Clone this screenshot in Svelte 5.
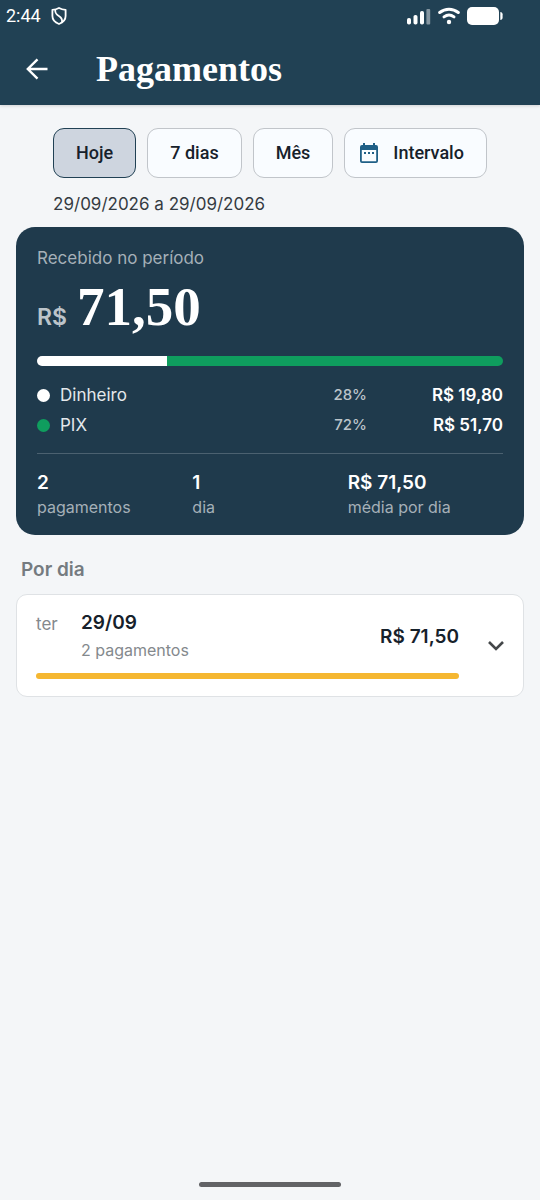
<script>
    const filters = [
        { id: 'hoje', label: 'Hoje' },
        { id: 'semana', label: '7 dias' },
        { id: 'mes', label: 'Mês' },
        { id: 'intervalo', label: 'Intervalo', icon: true }
    ];

    const methods = [
        { name: 'Dinheiro', percent: 28, total: 19.8, kind: 'cash' },
        { name: 'PIX', percent: 72, total: 51.7, kind: 'pix' }
    ];

    const days = [{ weekday: 'ter', date: '29/09', count: 2, total: 71.5 }];

    let selected = $state('hoje');
    let total = $derived(methods.reduce((sum, m) => sum + m.total, 0));
    let highest = Math.max(...days.map((d) => d.total));

    function money(value) {
        return value.toFixed(2).replace('.', ',');
    }
</script>

<div class="screen">
    <header>
        <div class="status-bar">
            <span class="clock">2:44</span>
            <svg class="shield" width="16" height="18" viewBox="0 0 16 18" fill="none" stroke="#fff" stroke-width="1.8" stroke-linejoin="round">
                <path d="M8 1c1.800 1.100 4 1.700 6.600 1.800v6.200c0 3.600-2.600 6.500-6.600 8-4-1.500-6.600-4.400-6.600-8V2.800C4 2.700 6.200 2.100 8 1z" />
                <path d="M4.200 2.400C4 6.500 5.500 7.700 8.200 9.300c2.300 1.400 3.200 2.800 2.900 6" />
            </svg>
            <div class="system-icons">
                <svg width="24" height="18" viewBox="0 0 24 18" fill="#fff">
                    <rect x="0" y="11" width="4" height="6.500" rx="1.800" />
                    <rect x="6.500" y="8" width="4" height="9.500" rx="1.800" />
                    <rect x="13" y="4" width="4" height="13.500" rx="1.800" />
                    <rect x="19.400" y="2" width="3.800" height="15.500" rx="1" opacity="0.45" />
                </svg>
                <svg width="22" height="18" viewBox="0 0 22 18" fill="none" stroke="#fff" stroke-width="3" stroke-linecap="round">
                    <path d="M1.700 5.500c5.600-4.400 13-4.400 18.600 0" />
                    <path d="M6 9.900c3-2.200 7-2.200 10 0" />
                    <circle cx="11" cy="15" r="2.200" fill="#fff" stroke="none" />
                </svg>
                <svg width="36" height="18" viewBox="0 0 36 18" fill="#fff">
                    <rect x="0" y="0" width="32" height="18" rx="5" />
                    <path d="M33.300 5c1.500.2 2.300 1 2.300 2.200v3.600c0 1.200-.8 2-2.300 2.200z" />
                </svg>
            </div>
        </div>
        <div class="app-bar">
            <button class="back" aria-label="Voltar">
                <svg width="22" height="22" viewBox="0 0 22 22" fill="none" stroke="#fff" stroke-width="2.400">
                    <path d="M21.500 11H2M11.500 1.300 1.800 11l9.700 9.700" />
                </svg>
            </button>
            <h1>Pagamentos</h1>
        </div>
    </header>

    <main>
        <div class="period">
            <div class="filters">
                {#each filters as f}
                    <button class="chip" class:active={selected === f.id} class:with-icon={f.icon} onclick={() => (selected = f.id)}>
                        {#if f.icon}
                            <svg width="18" height="20" viewBox="0 0 18 20" fill="#1f5f86">
                                <path fill-rule="evenodd" d="M3 0h2v2h8V0h2v2h1a2 2 0 0 1 2 2v14a2 2 0 0 1-2 2H2a2 2 0 0 1-2-2V4a2 2 0 0 1 2-2h1zM1.800 7v11.200h14.400V7z" />
                                <path d="M4 9h2v2H4zM8 9h2v2H8zM12 9h2v2h-2z" />
                            </svg>
                        {/if}
                        {f.label}
                    </button>
                {/each}
            </div>
            <p class="range">29/09/2026 a 29/09/2026</p>
        </div>

        <section class="summary">
            <p class="caption">Recebido no período</p>
            <p class="amount"><span class="currency">R$</span> <span class="value">{money(total)}</span></p>
            <div class="split">
                {#each methods as m}
                    <div class={m.kind} style="width: {m.percent}%"></div>
                {/each}
            </div>
            <ul class="methods">
                {#each methods as m}
                    <li>
                        <span class="dot {m.kind}"></span>
                        <span class="method-name">{m.name}</span>
                        <span class="percent">{m.percent}%</span>
                        <span class="method-total">R$ {money(m.total)}</span>
                    </li>
                {/each}
            </ul>
            <div class="stats">
                <div><strong>2</strong><span>pagamentos</span></div>
                <div><strong>1</strong><span>dia</span></div>
                <div><strong>R$ {money(total / days.length)}</strong><span>média por dia</span></div>
            </div>
        </section>

        <h2>Por dia</h2>
        {#each days as d}
            <button class="day">
                <span class="day-body">
                    <span class="day-row">
                        <span class="weekday">{d.weekday}</span>
                        <span class="day-info">
                            <strong>{d.date}</strong>
                            <span>{d.count} pagamentos</span>
                        </span>
                        <strong class="day-total">R$ {money(d.total)}</strong>
                    </span>
                    <span class="day-bar" style="width: {(d.total / highest) * 100}%"></span>
                </span>
                <svg width="16" height="10" viewBox="0 0 16 10" fill="none" stroke="#444749" stroke-width="2.600">
                    <path d="m1 1 7 7 7-7" />
                </svg>
            </button>
        {/each}
    </main>

    <div class="home-indicator"></div>
</div>

<style>
    :global(body) {
        margin: 0;
        background: #f4f6f8;
    }

    .screen {
        min-height: 100vh;
        box-sizing: border-box;
        display: flex;
        flex-direction: column;
        font-family: 'Inter', 'Liberation Sans', sans-serif;
        font-size: 17px;
        line-height: 22px;
        color: #16212b;
    }

    p,
    h1,
    h2,
    ul {
        margin: 0;
        padding: 0;
    }

    button {
        font: inherit;
        color: inherit;
        cursor: pointer;
    }

    header {
        background: #214154;
        color: #fff;
        box-shadow: 0 1px 3px rgba(0, 0, 0, 0.15);
    }

    .status-bar {
        display: flex;
        align-items: center;
        height: 32px;
        padding: 0 37px 0 6px;
        font-family: 'Roboto', sans-serif;
        font-size: 18px;
    }

    .shield {
        margin-left: 10px;
    }

    .system-icons {
        display: flex;
        gap: 7px;
        margin-left: auto;
    }

    .app-bar {
        display: flex;
        align-items: center;
        height: 73px;
        padding: 0 26px;
        gap: 48px;
    }

    .back {
        display: flex;
        padding: 0;
        border: 0;
        background: none;
    }

    h1 {
        font-family: 'Liberation Serif', serif;
        font-size: 36px;
        line-height: 40px;
        font-weight: 700;
    }

    main {
        display: flex;
        flex-direction: column;
        padding: 23px 16px;
    }

    .period {
        align-self: center;
    }

    .filters {
        display: flex;
        gap: 11px;
    }

    .chip {
        display: flex;
        align-items: center;
        gap: 15px;
        height: 50px;
        padding: 0 22px;
        border: 1px solid #c1c5ca;
        border-radius: 11px;
        background: #f9fcff;
        font-family: 'Roboto', sans-serif;
        font-size: 18px;
        font-weight: 500;
    }

    .chip.with-icon {
        padding-left: 15px;
    }

    .chip.active {
        border-color: #214154;
        background: #ced5df;
    }

    .range {
        margin: 15px 0 12px;
        color: #343b42;
    }

    .summary {
        padding: 20px 21px 17px;
        border-radius: 19px;
        background: #1f3a4c;
        color: #fff;
    }

    .caption {
        color: #a5b0b8;
    }

    .amount {
        display: flex;
        align-items: baseline;
        gap: 10px;
        line-height: 56px;
        margin: 10px 0 11px;
    }

    .currency {
        font-size: 23px;
        font-weight: 600;
        color: #bcc4ca;
    }

    .value {
        font-family: 'Liberation Serif', serif;
        font-size: 55px;
        font-weight: 700;
    }

    .split {
        display: flex;
        height: 10px;
        border-radius: 5px;
        overflow: hidden;
    }

    .cash {
        background: #fff;
    }

    .pix {
        background: #0f9d5e;
    }

    .methods {
        display: grid;
        gap: 8px;
        margin-top: 18px;
        list-style: none;
    }

    .methods li {
        display: grid;
        grid-template-columns: 13px 1fr 60px 126px;
        align-items: center;
        column-gap: 10px;
    }

    .dot {
        width: 13px;
        height: 13px;
        border-radius: 50%;
    }

    .method-name {
        color: #e4e8eb;
    }

    .percent {
        font-size: 15px;
        font-weight: 500;
        text-align: right;
        color: #bcc4ca;
    }

    .method-total {
        font-weight: 600;
        text-align: right;
    }

    .stats {
        display: grid;
        grid-template-columns: repeat(3, 1fr);
        margin-top: 17px;
        padding-top: 17px;
        border-top: 1px solid #4b6170;
    }

    .stats div {
        display: grid;
        gap: 1px;
    }

    .stats strong {
        font-size: 19px;
        line-height: 24px;
        font-weight: 600;
    }

    .stats span {
        font-size: 16px;
        color: #a5b0b8;
    }

    h2 {
        margin: 24px 5px 13px;
        font-size: 19px;
        line-height: 22px;
        font-weight: 600;
        color: #757b80;
    }

    .day {
        display: flex;
        align-items: center;
        gap: 29px;
        padding: 17px 19px;
        border: 1px solid #dfe2e5;
        border-radius: 11px;
        background: #fff;
        text-align: left;
    }

    .day-body {
        flex: 1;
    }

    .day-row {
        display: flex;
        align-items: center;
    }

    .weekday {
        align-self: flex-start;
        width: 45px;
        line-height: 24px;
        color: #84898d;
    }

    .day-info {
        display: grid;
        gap: 5px;
        flex: 1;
        font-size: 16px;
        color: #84898d;
    }

    .day strong {
        font-size: 19px;
        font-weight: 600;
        color: #16212b;
    }

    .day-bar {
        display: block;
        height: 6px;
        margin-top: 12px;
        border-radius: 3px;
        background: #f5b731;
    }

    .home-indicator {
        width: 142px;
        height: 5px;
        margin: auto auto 13px;
        border-radius: 3px;
        background: #626366;
    }
</style>
